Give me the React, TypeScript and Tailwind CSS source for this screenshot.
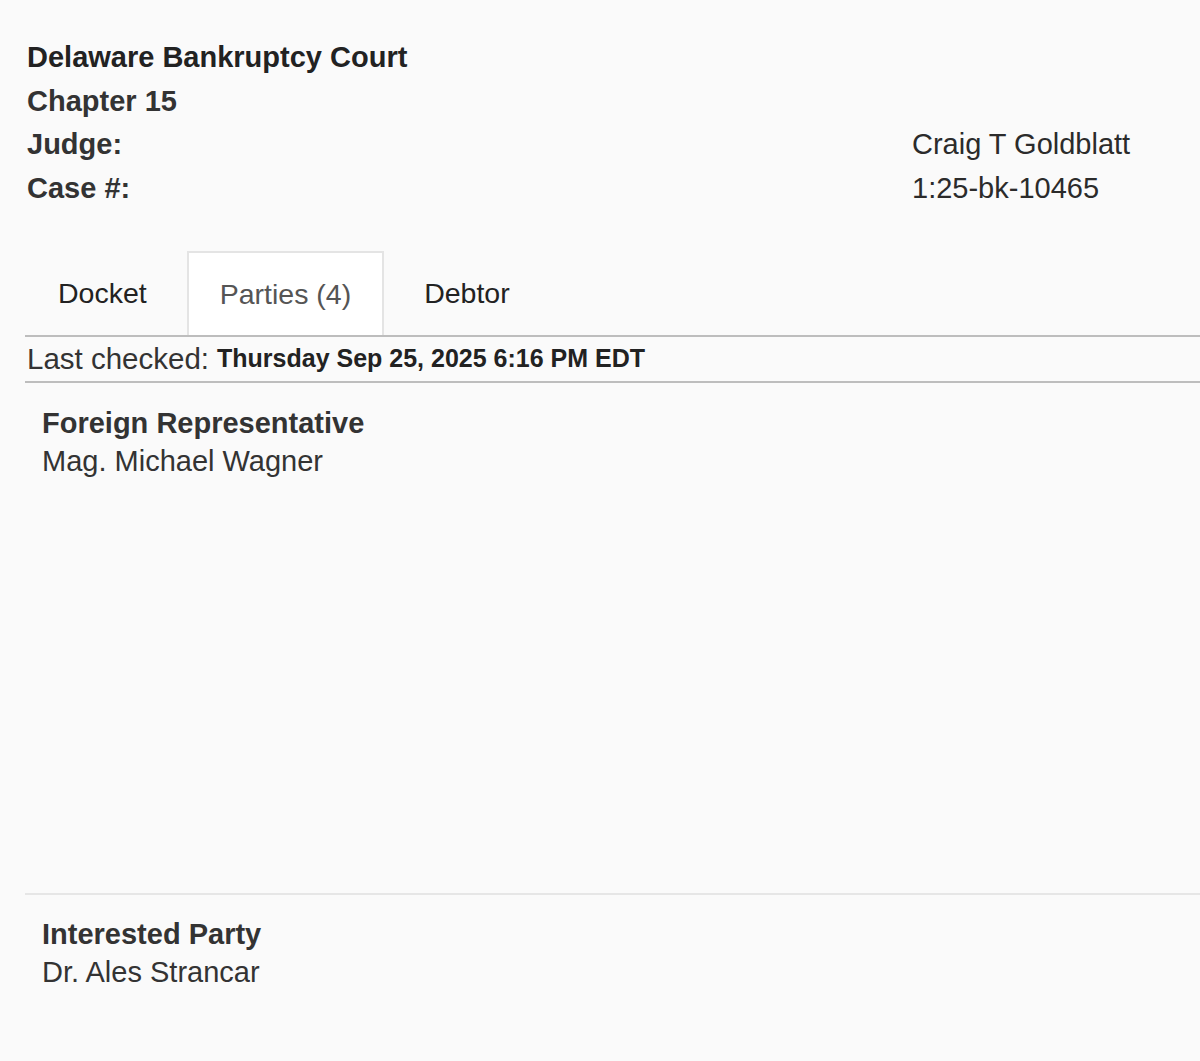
import React from "react";

const parties = [
	{ role: "Foreign Representative", name: "Mag. Michael Wagner" },
	{ role: "Interested Party", name: "Dr. Ales Strancar" },
];

const tabs = [
	{ label: "Docket", active: false },
	{ label: "Parties (4)", active: true },
	{ label: "Debtor", active: false },
];

export default function App() {
	return (
		<div
			className="min-h-[1061px] w-[1200px] overflow-hidden bg-[#fafafa] text-[#333]"
			style={{ fontFamily: '"Liberation Sans", Arial, sans-serif' }}
		>
			{/* case header */}
			<div className="pl-[27px] pt-9 text-[29px] leading-[43.5px]">
				<div className="font-bold text-[#222]">Delaware Bankruptcy Court</div>
				<div className="font-bold">Chapter 15</div>
				<div className="grid grid-cols-[885px_1fr]">
					<div className="font-bold">Judge:</div>
					<div className="text-[#2b2b2b]">Craig T Goldblatt</div>
					<div className="font-bold">Case #:</div>
					<div className="text-[#2b2b2b]">1:25-bk-10465</div>
				</div>
			</div>

			<div className="ml-[25px] mt-[41px] w-[1200px]">
				{/* tabs */}
				<div className="flex gap-[7px] border-b-2 border-[#bdbdbd]">
					{tabs.map((t) => (
						<div
							key={t.label}
							className={
								t.active
									? "flex h-[84px] items-center border-2 border-b-0 border-[#e4e4e4] bg-white px-[31px] text-[28.5px] text-[#555]"
									: "flex h-[84px] items-center border-2 border-transparent px-[31px] text-[28.5px] text-[#222]"
							}
						>
							{t.label}
						</div>
					))}
				</div>

				<div className="flex h-[46px] items-center border-b-2 border-[#bdbdbd] pl-[2px]">
					<span className="text-[29.5px] text-[#333]">Last checked:</span>
					<span className="ml-[8px] text-[25px] font-bold text-[#222]">
						Thursday Sep 25, 2025 6:16 PM EDT
					</span>
				</div>

				{/* parties */}
				<div className="h-[512px] border-b-2 border-[#e6e6e6] pl-[17px] pt-[21px] text-[29px] leading-[38px]">
					<div className="font-bold">{parties[0].role}</div>
					<div>{parties[0].name}</div>
				</div>
				<div className="pl-[17px] pt-[20px] text-[29px] leading-[38px]">
					<div className="font-bold">{parties[1].role}</div>
					<div>{parties[1].name}</div>
				</div>
			</div>
		</div>
	);
}
